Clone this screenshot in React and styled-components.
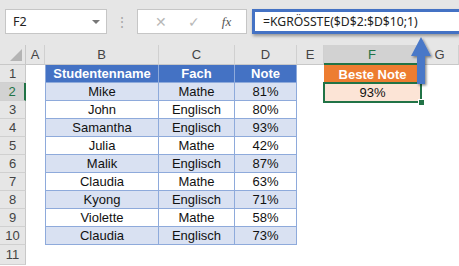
import styled, { createGlobalStyle } from "styled-components";

// Sheet data
const rows = [
  ["Mike", "Mathe", "81%"],
  ["John", "Englisch", "80%"],
  ["Samantha", "Englisch", "93%"],
  ["Julia", "Mathe", "42%"],
  ["Malik", "Englisch", "87%"],
  ["Claudia", "Mathe", "63%"],
  ["Kyong", "Englisch", "71%"],
  ["Violette", "Mathe", "58%"],
  ["Claudia", "Englisch", "73%"],
];

const columns = ["A", "B", "C", "D", "E", "F", "G"];

export default function App() {
  return (
    <>
      <GlobalStyle />
      <Page>
        {/* Name box + formula bar */}
        <Toolbar>
          <NameBox>
            F2
            <Caret />
          </NameBox>
          <Grip>⋮</Grip>
          <FxBox>
            <FxIcon $light>✕</FxIcon>
            <FxIcon $light>✓</FxIcon>
            <FxIcon $italic>fx</FxIcon>
          </FxBox>
          <FormulaBox>=KGRÖSSTE($D$2:$D$10;1)</FormulaBox>
        </Toolbar>

        {/* Grid */}
        <Sheet>
          <Corner />
          {columns.map((c) => (
            <ColHeader key={c} $active={c === "F"}>
              {c}
            </ColHeader>
          ))}

          <RowHeader>1</RowHeader>
          <Blank />
          <TableCell $head $first>Studentenname</TableCell>
          <TableCell $head>Fach</TableCell>
          <TableCell $head>Note</TableCell>
          <Blank />
          <ResultHead>Beste Note</ResultHead>
          <Blank />

          {rows.map((r, i) => {
            const n = i + 2;
            const alt = n % 2 === 0;
            return [
              <RowHeader key={"h" + n} $active={n === 2}>
                {n}
              </RowHeader>,
              <Blank key={"a" + n} />,
              <TableCell key={"b" + n} $alt={alt} $first>
                {r[0]}
              </TableCell>,
              <TableCell key={"c" + n} $alt={alt}>
                {r[1]}
              </TableCell>,
              <TableCell key={"d" + n} $alt={alt}>
                {r[2]}
              </TableCell>,
              <Blank key={"e" + n} />,
              n === 2 ? (
                <ResultCell key={"f" + n}>93%</ResultCell>
              ) : (
                <Blank key={"f" + n} />
              ),
              <Blank key={"g" + n} />,
            ];
          })}

          <RowHeader>11</RowHeader>
        </Sheet>

        {/* Callout arrow */}
        <Arrow width="30" height="56" viewBox="0 0 30 56">
          <defs>
            <filter id="sh" x="-50%" y="-50%" width="200%" height="200%">
              <feDropShadow dx="1.5" dy="1.5" stdDeviation="1.2" floodOpacity="0.45" />
            </filter>
          </defs>
          <path
            d="M13 2 L23 21 L17 21 L17 49 L9 49 L9 21 L3 21 Z"
            fill="#4a78c8"
            filter="url(#sh)"
          />
        </Arrow>
      </Page>
    </>
  );
}

// Styled components

const GlobalStyle = createGlobalStyle`
  body {
    margin: 0;
    background: #fff;
    font-family: "Liberation Sans", Arial, sans-serif;
  }
`;

const Page = styled.div`
  position: relative;
  width: 459px;
  height: 266px;
  overflow: hidden;
  background: #fff;
`;

const Toolbar = styled.div`
  display: flex;
  align-items: flex-start;
  height: 45px;
  box-sizing: border-box;
  padding: 9px 0 0 5px;
  background: #e6e6e6;
  font-family: "Noto Sans", "Open Sans", sans-serif;
`;

const NameBox = styled.div`
  display: flex;
  align-items: center;
  justify-content: space-between;
  box-sizing: border-box;
  width: 102px;
  height: 25px;
  padding: 0 6px 0 7px;
  background: #fff;
  border: 1px solid #c6c6c6;
  font-size: 12.5px;
  color: #222;
`;

const Caret = styled.span`
  width: 0;
  height: 0;
  border-left: 4px solid transparent;
  border-right: 4px solid transparent;
  border-top: 4px solid #777;
`;

const Grip = styled.div`
  width: 30px;
  height: 25px;
  line-height: 25px;
  text-align: center;
  color: #a8a8a8;
  font-size: 14px;
`;

const FxBox = styled.div`
  display: flex;
  align-items: center;
  justify-content: space-around;
  box-sizing: border-box;
  width: 110px;
  height: 25px;
  padding: 0 4px 0 6px;
  background: #fff;
  border: 1px solid #c6c6c6;
`;

const FxIcon = styled.span`
  font-family: ${(p) => (p.$italic ? '"Liberation Serif", serif' : "inherit")};
  font-style: ${(p) => (p.$italic ? "italic" : "normal")};
  font-size: ${(p) => (p.$italic ? "13px" : "14px")};
  color: ${(p) => (p.$light ? "#b8b8b8" : "#555")};
`;

const FormulaBox = styled.div`
  flex: 1;
  box-sizing: border-box;
  height: 25px;
  margin-left: 5px;
  padding-left: 8px;
  line-height: 19px;
  background: #fff;
  border: 3px solid #4472c4;
  border-right: none;
  box-shadow: 1px 2px 3px rgba(0, 0, 0, 0.35);
  font-size: 12.2px;
  color: #222;
`;

const Sheet = styled.div`
  display: grid;
  grid-template-columns: 26px 19px 114px 76px 62px 27px 97px 1fr;
  grid-template-rows: 20px repeat(10, 18px) 20px;
  font-size: 13px;
`;

const HeaderBase = styled.div`
  display: flex;
  align-items: center;
  justify-content: center;
  box-sizing: border-box;
  background: #e6e6e6;
  color: #444;
  font-size: 13px;
`;

const Corner = styled(HeaderBase)`
  position: relative;
  border-right: 1px solid #c8c8c8;
  border-bottom: 1px solid #c8c8c8;
  &::after {
    content: "";
    position: absolute;
    right: 3px;
    bottom: 3px;
    width: 12px;
    height: 12px;
    background: #b4b4b4;
    clip-path: polygon(100% 0, 100% 100%, 0 100%);
  }
`;

const ColHeader = styled(HeaderBase)`
  border-right: 1px solid #d0d0d0;
  border-bottom: ${(p) => (p.$active ? "2px solid #217346" : "1px solid #c8c8c8")};
  background: ${(p) => (p.$active ? "#d2d2d2" : "#e6e6e6")};
  color: ${(p) => (p.$active ? "#217346" : "#444")};
`;

const RowHeader = styled(HeaderBase)`
  grid-column: 1;
  border-bottom: 1px solid #d0d0d0;
  border-right: ${(p) => (p.$active ? "2px solid #217346" : "1px solid #c8c8c8")};
  background: ${(p) => (p.$active ? "#d2d2d2" : "#e6e6e6")};
  color: ${(p) => (p.$active ? "#217346" : "#444")};
`;

const Blank = styled.div`
  background: #fff;
`;

const TableCell = styled.div`
  display: flex;
  align-items: center;
  justify-content: center;
  box-sizing: border-box;
  border-right: 1px solid #8eaadb;
  border-bottom: 1px solid #8eaadb;
  border-left: ${(p) => (p.$first ? "1px solid #8eaadb" : "none")};
  background: ${(p) => (p.$head ? "#4472c4" : p.$alt ? "#d9e1f2" : "#fff")};
  color: ${(p) => (p.$head ? "#fff" : "#111")};
  font-weight: ${(p) => (p.$head ? "bold" : "normal")};
`;

const ResultHead = styled.div`
  display: flex;
  align-items: center;
  justify-content: center;
  background: #ed7d31;
  color: #fff;
  font-weight: bold;
`;

const ResultCell = styled.div`
  position: relative;
  display: flex;
  align-items: center;
  justify-content: center;
  background: #fce4d6;
  color: #111;
  &::before {
    content: "";
    position: absolute;
    inset: -1px -1px -2px -1px;
    border: 2px solid #217346;
  }
  &::after {
    content: "";
    position: absolute;
    right: -4px;
    bottom: -5px;
    width: 5px;
    height: 5px;
    background: #217346;
    border: 1px solid #fff;
  }
`;

const Arrow = styled.svg`
  position: absolute;
  left: 408px;
  top: 35px;
`;
